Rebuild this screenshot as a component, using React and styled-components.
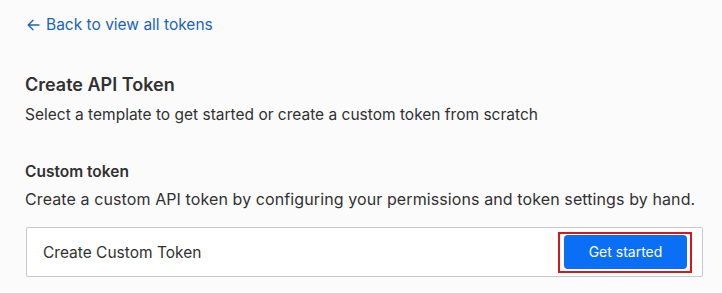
import styled, { createGlobalStyle } from "styled-components";

const GlobalStyle = createGlobalStyle`
  body {
    margin: 0;
    background-color: #fbfbfc;
    font-family: Inter, "Noto Sans", sans-serif;
    color: #313131;
  }
`;

const Page = styled.div`
  padding: 14px 19px 0 26px;
  display: flex;
  flex-direction: column;
`;

const BackLink = styled.a`
  display: flex;
  align-items: center;
  gap: 6px;
  font-size: 15.5px;
  line-height: 22px;
  color: #1a63bf;
  text-decoration: none;
  cursor: pointer;
  margin-left: 1px;
`;

const Title = styled.h1`
  margin: 36px 0 0 -1px;
  font-size: 18px;
  line-height: 26px;
  font-weight: 600;
  color: #313131;
`;

const Text = styled.p`
  margin: ${(p) => p.$top}px 0 0 -1px;
  font-size: ${(p) => p.$size || 15.5}px;
  letter-spacing: ${(p) => p.$spacing || 0}px;
  line-height: 22px;
  white-space: nowrap;
  color: #313131;
`;

const SectionTitle = styled.h2`
  margin: 35px 0 0 -1px;
  font-size: 15.5px;
  line-height: 22px;
  font-weight: 600;
  color: #313131;
`;

const Card = styled.div`
  margin-top: 17px;
  height: 50px;
  box-sizing: border-box;
  border: 1px solid #c9c9c9;
  border-radius: 2px;
  background: #ffffff;
  display: flex;
  align-items: center;
  justify-content: space-between;
  padding: 0 10px 0 16px;
`;

const CardLabel = styled.span`
  font-size: 15.5px;
  color: #313131;
`;

const Highlight = styled.span`
  display: flex;
  border: 2px solid #d9161b;
  padding: 1px 3px 2px 4px;
`;

const Button = styled.button`
  width: 123px;
  height: 34px;
  border: none;
  border-radius: 4px;
  background: #0b6ff6;
  color: #ffffff;
  font-family: Inter, "Noto Sans", sans-serif;
  font-size: 14px;
  cursor: pointer;
`;

function App() {
  return (
    <>
      <GlobalStyle />
      <Page>
        <BackLink>
          <svg width="13" height="12" viewBox="0 0 13 12" fill="none">
            <path
              d="M12 6H1.5M6 1.2L1.2 6L6 10.8"
              stroke="#1a63bf"
              strokeWidth="1.3"
              strokeLinecap="round"
              strokeLinejoin="round"
            />
          </svg>
          Back to view all tokens
        </BackLink>
        <Title>Create API Token</Title>
        <Text $top={6}>
          Select a template to get started or create a custom token from scratch
        </Text>
        <SectionTitle>Custom token</SectionTitle>
        <Text $top={5} $size={16} $spacing={0.1}>
          Create a custom API token by configuring your permissions and token
          settings by hand.
        </Text>
        <Card>
          <CardLabel>Create Custom Token</CardLabel>
          <Highlight>
            <Button>Get started</Button>
          </Highlight>
        </Card>
      </Page>
    </>
  );
}

export default App;
